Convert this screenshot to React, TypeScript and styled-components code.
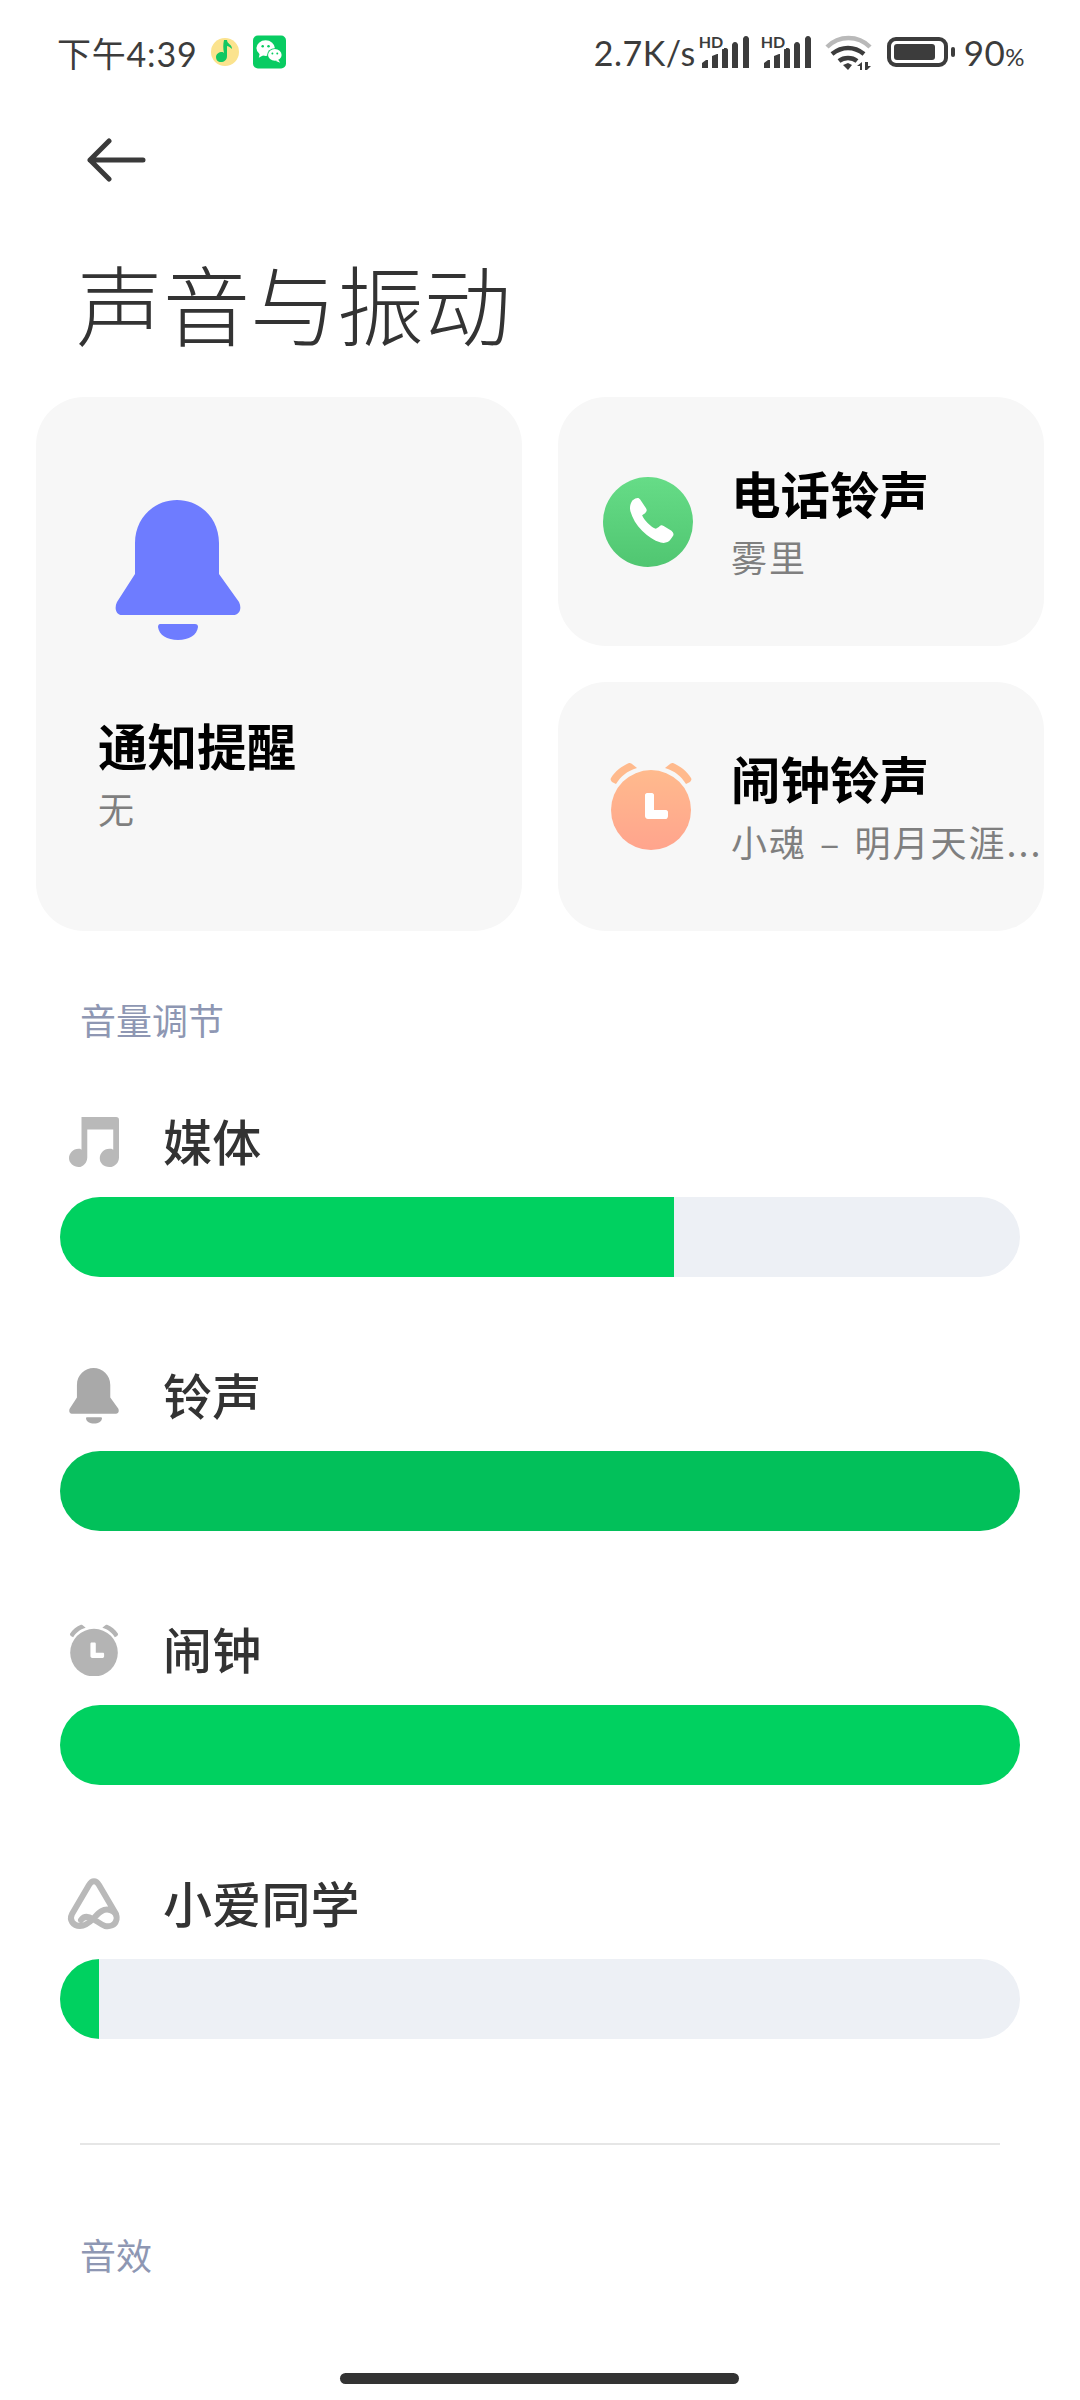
import * as React from "react";
import styled, { createGlobalStyle } from "styled-components";

const CJK = `"Noto Sans CJK SC", "Noto Sans", sans-serif`;

const GlobalStyle = createGlobalStyle`
	html, body {
		margin: 0;
		padding: 0;
		background: #fff;
	}
	body {
		font-family: ${CJK};
	}
`;

const BellIcon = ({ color, size }: { color: string; size: number }) => (
	<svg width={size} height={size * 1.12} viewBox="0 0 126 141">
		<path
			d="M20 74V43C20 17 40 0 62 0s42 17 42 43v31l20 28c3 6 1 13-6 13H7c-6 0-8-7-5-13z"
			fill={color}
		/>
		<path d="M45 124h35c2 0 3 1 3 3-1 8-9 13-20 13s-19-5-20-13c0-2 1-3 2-3z" fill={color} />
	</svg>
);

const PhoneIcon = () => (
	<svg width="90" height="90" viewBox="0 0 92 92">
		<defs>
			<linearGradient id="phoneBg" x1="0" y1="0" x2="0" y2="1">
				<stop offset="0" stopColor="#66dc87" />
				<stop offset="1" stopColor="#50c671" />
			</linearGradient>
		</defs>
		<circle cx="46" cy="46" r="46" fill="url(#phoneBg)" />
		<path
			d="M30 24l3-2c2-1 4-1 5 1l6 9c1 2 1 3-1 5l-3 2c2 5 9 12 14 14l3-2c2-2 3-2 5-1l8 5c2 2 3 4 1 6l-2 3c-2 3-6 4-10 3-7-2-13-6-19-12-6-6-10-13-12-20-1-4 0-8 2-11z"
			fill="#fff"
		/>
	</svg>
);

const AlarmIcon = ({ size, bg, id }: { size: number; bg: [string, string]; id: string }) => (
	<svg width={size} height={size * 1.05} viewBox="0 0 84 88">
		<defs>
			<linearGradient id={id} x1="0" y1="0" x2="0" y2="1">
				<stop offset="0" stopColor={bg[0]} />
				<stop offset="1" stopColor={bg[1]} />
			</linearGradient>
		</defs>
		<circle cx="42" cy="48" r="40" fill={`url(#${id})`} />
		<path d="M2 16c4-7 11-12 18-15 1 0 2 0 3 1l5 4C18 9 12 14 7 22L3 20c-1-1-2-3-1-4z" fill={bg[0]} />
		<path d="M82 16C78 9 71 4 64 1c-1 0-2 0-3 1l-5 4c10 3 16 8 21 16l4-2c1-1 2-3 1-4z" fill={bg[0]} />
		<path d="M38 31h5c1 0 2 1 2 2v15h12c1 0 2 1 2 2v4c0 1-1 3-2 3H39c-2 0-3-2-3-3V33c0-1 1-2 2-2z" fill="#fff" />
	</svg>
);

const NoteIcon = () => (
	<svg width="50" height="50" viewBox="0 0 52 52">
		<path
			d="M13 0h36c2 0 3 1 3 3v39c0 5-4 10-10 10s-10-4-10-9 4-10 10-10c1 0 3 0 4 1V13H19v29c0 5-4 10-9 10S0 48 0 43s4-10 10-10c1 0 2 0 3 1V0z"
			fill="#b9b9b9"
		/>
	</svg>
);

const XiaoAiIcon = () => (
	<svg width="56" height="52" viewBox="0 0 56 52">
		<path
			d="M23 7 6 36c-3 6 1 12 8 12 5 0 9-3 13-7 5-5 9-11 17-9 5 1 8 6 6 11-1 4-6 6-11 5-5-2-8-5-12-7-5-3-9-3-12 1M33 7l17 29M23 7c3-5 7-5 10 0"
			fill="none"
			stroke="#b9b9b9"
			strokeWidth="6"
			strokeLinecap="round"
			strokeLinejoin="round"
		/>
	</svg>
);

const MusicBadge = () => (
	<svg width="30" height="30" viewBox="0 0 30 30">
		<circle cx="15" cy="15" r="14" fill="#fbe38e" />
		<path d="M14 3l3 0c0 4 5 4 5 9-2-2-4-3-5-3v10c0 4-3 6-6 6s-5-2-5-5 3-5 6-5c1 0 1 0 2 1-1-4-1-9 0-13z" fill="#12c762" />
	</svg>
);

const WeChatBadge = () => (
	<svg width="33" height="34" viewBox="0 0 34 34">
		<rect width="34" height="34" rx="5" fill="#08cc62" />
		<ellipse cx="13" cy="13" rx="9.5" ry="8" fill="#fff" />
		<path d="M7 18l-1 5 5-3z" fill="#fff" />
		<ellipse cx="22.5" cy="20" rx="8" ry="6.8" fill="#08cc62" />
		<ellipse cx="22.5" cy="20" rx="7" ry="6" fill="#fff" />
		<path d="M26 25l2 3-5-2z" fill="#fff" />
		<circle cx="10" cy="11" r="1.3" fill="#08cc62" />
		<circle cx="16" cy="11" r="1.3" fill="#08cc62" />
		<circle cx="20" cy="18.5" r="1" fill="#08cc62" />
		<circle cx="25" cy="18.5" r="1" fill="#08cc62" />
	</svg>
);

const SignalIcon = () => (
	<SignalWrap>
		<HdMark>HD</HdMark>
		<svg width="50" height="32" viewBox="0 0 48 32">
			<path
				d="M0 32v-5l4-3h2v8zM10 32V20l5-2h1v14zM20 32V14c0-1 1-2 2-2h2c1 0 2 1 2 2v18zM30 32V9c0-1 1-3 3-3s3 2 3 3v23zM41 32V3c0-1 1-3 3-3s3 2 3 3v29z"
				fill="#3c3c3c"
			/>
		</svg>
	</SignalWrap>
);

const WifiIcon = () => (
	<svg width="47" height="35" viewBox="0 0 47 35">
		<path d="M2 12C14 0 33 0 45 12" fill="none" stroke="#b9b9b9" strokeWidth="4.5" />
		<path d="M7 19c10-8 22-8 32 0" fill="none" stroke="#3c3c3c" strokeWidth="4.5" />
		<path d="M14 26c5-4 13-4 18 0" fill="none" stroke="#3c3c3c" strokeWidth="4.5" />
		<path d="M18 30l5-2 4 2-4 5z" fill="#3c3c3c" />
		<path d="M32 31l5-4v8h-2v-4zM40 27h3v4h3l-4 4h-2z" fill="#3c3c3c" />
	</svg>
);

const ArrowIcon = () => (
	<svg width="60" height="44" viewBox="0 0 60 44">
		<path d="M57 22H4M23 3 4 22l19 19" fill="none" stroke="#3a3a3a" strokeWidth="5" strokeLinecap="round" strokeLinejoin="round" />
	</svg>
);

const volumes = [
	{ name: "媒体", level: 64, fill: "#00d160", icon: <NoteIcon /> },
	{ name: "铃声", level: 100, fill: "#02c05a", icon: <BellIcon color="#a9a9a9" size={50} /> },
	{ name: "闹钟", level: 100, fill: "#00d160", icon: <AlarmIcon size={50} bg={["#b4b4b4", "#b4b4b4"]} id="alarmGrey" /> },
	{ name: "小爱同学", level: 4.1, fill: "#00d160", icon: <XiaoAiIcon /> },
];

const App = () => {
	return (
		<Page>
			<GlobalStyle />
			<StatusBar>
				<Time>下午4:39</Time>
				<MusicBadge />
				<WeChatBadge />
				<StatusRight>
					<Speed>2.7K/s</Speed>
					<SignalIcon />
					<SignalIcon />
					<WifiIcon />
					<Battery>
						<BatteryLevel />
					</Battery>
					<BatteryNub />
					<Percent>
						90<small>%</small>
					</Percent>
				</StatusRight>
			</StatusBar>
			<BackRow>
				<ArrowIcon />
			</BackRow>
			<Title>声音与振动</Title>
			<Cards>
				<TallCard>
					<BellIcon color="#6e7cff" size={126} />
					<TallText>
						<CardTitle>通知提醒</CardTitle>
						<CardSub>无</CardSub>
					</TallText>
				</TallCard>
				<WideCard>
					<PhoneSlot>
						<PhoneIcon />
					</PhoneSlot>
					<WideText>
						<CardTitle>电话铃声</CardTitle>
						<CardSub>雾里</CardSub>
					</WideText>
				</WideCard>
				<WideCard>
					<AlarmSlot>
						<AlarmIcon size={84} bg={["#ffba8d", "#ffa48d"]} id="alarmOrange" />
					</AlarmSlot>
					<WideText>
						<CardTitle>闹钟铃声</CardTitle>
						<CardSub>小魂 – 明月天涯...</CardSub>
					</WideText>
				</WideCard>
			</Cards>
			<SectionLabel>音量调节</SectionLabel>
			<VolumeList>
				{volumes.map((v) => (
					<VolumeRow key={v.name}>
						<VolumeHead>
							<IconSlot>{v.icon}</IconSlot>
							<VolumeName>{v.name}</VolumeName>
						</VolumeHead>
						<Track>
							<Fill $color={v.fill} style={{ width: `${v.level}%` }} />
						</Track>
					</VolumeRow>
				))}
			</VolumeList>
			<Divider />
			<SectionLabelLower>音效</SectionLabelLower>
			<HomeBar />
		</Page>
	);
};

const Page = styled.div`
	position: relative;
	width: 1080px;
	height: 2400px;
	overflow: hidden;
	background: #fff;
`;

const StatusBar = styled.div`
	display: flex;
	align-items: center;
	gap: 13px;
	height: 104px;
	padding: 0 55px 0 57px;
	color: #3c3c3c;
`;

const Time = styled.span`
	font-size: 34px;
	font-family: "Lato", ${CJK};
	letter-spacing: 0.8px;
`;

const StatusRight = styled.div`
	display: flex;
	align-items: center;
	margin-left: auto;
`;

const Speed = styled.span`
	font-family: "Lato", sans-serif;
	font-size: 34px;
	letter-spacing: 0.5px;
	margin-right: 5px;
`;

const SignalWrap = styled.span`
	position: relative;
	display: block;
	width: 50px;
	height: 32px;
	margin-right: 12px;

	svg {
		display: block;
	}
`;

const HdMark = styled.span`
	position: absolute;
	left: -2px;
	top: -1px;
	font-family: "Lato", sans-serif;
	font-weight: 700;
	font-size: 16px;
	line-height: 14px;
	background: #fff;
	padding-right: 1px;
`;

const Battery = styled.span`
	display: block;
	width: 61px;
	height: 30px;
	box-sizing: border-box;
	margin-left: 15px;
	padding: 3px 9px 3px 3px;
	border: 4px solid #3c3c3c;
	border-radius: 9px;
`;

const BatteryLevel = styled.span`
	display: block;
	height: 100%;
	background: #3c3c3c;
	border-radius: 3px;
`;

const BatteryNub = styled.span`
	display: block;
	width: 4px;
	height: 10px;
	margin-left: 3px;
	background: #3c3c3c;
	border-radius: 2px;
`;

const Percent = styled.span`
	font-family: "Lato", sans-serif;
	font-size: 35px;
	letter-spacing: 0.5px;
	margin-left: 9px;

	small {
		font-size: 24px;
	}
`;

const BackRow = styled.div`
	display: flex;
	align-items: center;
	height: 112px;
	padding-left: 86px;
`;

const Title = styled.h1`
	margin: 0;
	height: 128px;
	padding: 22px 0 31px 76px;
	font-size: 87px;
	font-weight: 300;
	line-height: 128px;
	color: #333;
`;

const Cards = styled.div`
	display: grid;
	grid-template-columns: 486px 486px;
	grid-template-rows: 249px 249px;
	gap: 36px;
	padding: 0 36px;
`;

const Card = styled.div`
	box-sizing: border-box;
	background: #f7f7f7;
	border-radius: 48px;
`;

const TallCard = styled(Card)`
	grid-row: span 2;
	padding: 103px 0 0 79px;
`;

const TallText = styled.div`
	margin: 66px 0 0 -17px;
`;

const WideCard = styled(Card)`
	display: flex;
	align-items: center;
`;

const PhoneSlot = styled.div`
	display: flex;
	flex: 0 0 auto;
	width: 90px;
	margin-left: 45px;
`;

const AlarmSlot = styled.div`
	display: flex;
	flex: 0 0 auto;
	width: 84px;
	margin: 0 0 0 51px;
`;

const WideText = styled.div`
	margin-left: 38px;
	white-space: nowrap;
`;

const CardTitle = styled.div`
	font-size: 49.5px;
	font-weight: 700;
	line-height: 66px;
	color: #000;
`;

const CardSub = styled.div`
	margin-top: 3px;
	font-size: 36px;
	line-height: 54px;
	letter-spacing: 2px;
	word-spacing: 3px;
	color: #7f7f7f;
`;

const SectionLabel = styled.div`
	margin: 58px 0 0 80px;
	font-size: 36px;
	line-height: 60px;
	color: #8e97b3;
`;

const SectionLabelLower = styled(SectionLabel)`
	margin-top: 79px;
`;

const VolumeList = styled.div`
	display: flex;
	flex-direction: column;
	gap: 84px;
	margin-top: 58px;
	padding: 0 60px;
`;

const VolumeRow = styled.div`
	display: flex;
	flex-direction: column;
	gap: 20px;
`;

const VolumeHead = styled.div`
	display: flex;
	align-items: center;
	height: 70px;
`;

const IconSlot = styled.div`
	display: flex;
	justify-content: center;
	width: 68px;
	margin-right: 35px;
`;

const VolumeName = styled.div`
	margin-top: -5px;
	font-size: 49px;
	font-weight: 500;
	line-height: 70px;
	letter-spacing: 0.2px;
	color: #333;
`;

const Track = styled.div`
	height: 80px;
	background: #edf0f5;
	border-radius: 40px;
	overflow: hidden;
`;

const Fill = styled.div<{ $color: string }>`
	height: 100%;
	background: ${({ $color }) => $color};
`;

const Divider = styled.div`
	height: 2px;
	margin: 104px 80px 0;
	background: #e6e6e6;
`;

const HomeBar = styled.div`
	position: absolute;
	left: 340px;
	bottom: 16px;
	width: 399px;
	height: 11px;
	background: #333;
	border-radius: 6px;
`;

export default App;
